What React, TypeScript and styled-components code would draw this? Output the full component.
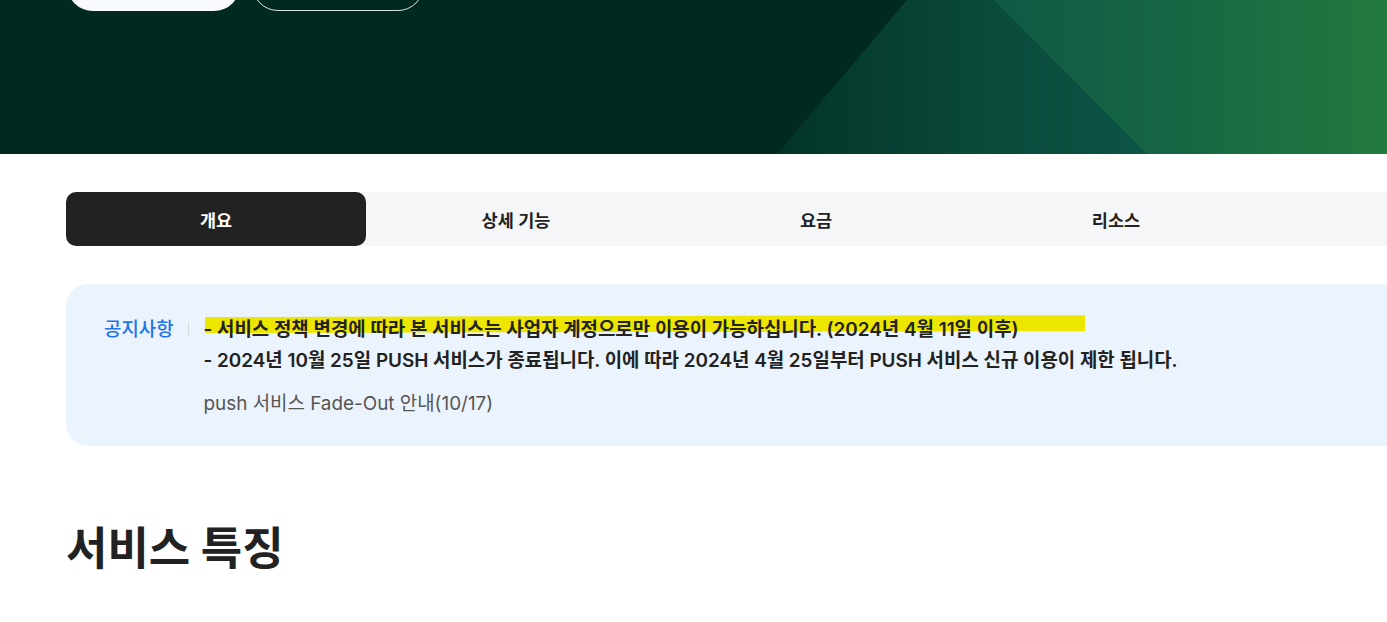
import React from "react";
import styled, { createGlobalStyle } from "styled-components";

const GlobalStyle = createGlobalStyle`
  html, body {
    margin: 0;
    padding: 0;
    background: #ffffff;
    overflow-x: hidden;
  }
  body {
    font-family: Inter, "Noto Sans CJK KR", sans-serif;
    color: #222222;
  }
`;

const tabs = ["개요", "상세 기능", "요금", "리소스"];

const notices = [
  "- 서비스 정책 변경에 따라 본 서비스는 사업자 계정으로만 이용이 가능하십니다. (2024년 4월 11일 이후)",
  "- 2024년 10월 25일 PUSH 서비스가 종료됩니다. 이에 따라 2024년 4월 25일부터 PUSH 서비스 신규 이용이 제한 됩니다.",
];

const HeroArt: React.FC = () => (
  <HeroSvg viewBox="0 0 1387 154" preserveAspectRatio="none">
    <defs>
      <linearGradient id="gA" x1="777" y1="0" x2="1387" y2="0" gradientUnits="userSpaceOnUse">
        <stop offset="0" stopColor="#03342a" />
        <stop offset="0.35" stopColor="#0a4a3b" />
        <stop offset="0.6" stopColor="#0c5444" />
        <stop offset="1" stopColor="#145f45" />
      </linearGradient>
      <linearGradient id="gB" x1="1000" y1="0" x2="1387" y2="0" gradientUnits="userSpaceOnUse">
        <stop offset="0" stopColor="#0f5a46" />
        <stop offset="0.45" stopColor="#176644" />
        <stop offset="1" stopColor="#217a3e" />
      </linearGradient>
    </defs>
    <rect x="0" y="0" width="1387" height="154" fill="#002920" />
    <polygon points="907,0 1387,0 1387,154 777,154" fill="url(#gA)" />
    <polygon points="994,0 1387,0 1387,154 1147,154" fill="url(#gB)" />
  </HeroSvg>
);

const App: React.FC = () => (
  <>
    <GlobalStyle />
    <Hero>
      <HeroArt />
      <HeroButtons>
        <PrimaryButton />
        <OutlineButton />
      </HeroButtons>
    </Hero>

    <Main>
      <TabBar>
        {tabs.map((t, i) => (
          <Tab key={t} $active={i === 0}>
            {t}
          </Tab>
        ))}
      </TabBar>

      <NoticeBox>
        <NoticeLabel>공지사항</NoticeLabel>
        <NoticeDivider />
        <NoticeBody>
          <Highlight />
          {notices.map((n) => (
            <NoticeLine key={n}>{n}</NoticeLine>
          ))}
          <NoticeLink>push 서비스 Fade-Out 안내(10/17)</NoticeLink>
        </NoticeBody>
      </NoticeBox>

      <SectionTitle>서비스 특징</SectionTitle>
    </Main>
  </>
);

export default App;

const Hero = styled.section`
  position: relative;
  height: 154px;
  overflow: hidden;
`;

const HeroSvg = styled.svg`
  position: absolute;
  inset: 0;
  width: 100%;
  height: 100%;
  display: block;
`;

const HeroButtons = styled.div`
  position: relative;
  display: flex;
  gap: 12px;
  margin-top: -41px;
  padding-left: 67px;
`;

const PrimaryButton = styled.div`
  width: 173px;
  height: 52px;
  border-radius: 26px;
  background: #f8fafd;
`;

const OutlineButton = styled.div`
  width: 170px;
  height: 50px;
  border-radius: 26px;
  border: 1px solid #d8e0dc;
`;

const Main = styled.main`
  padding: 38px 0 0 66px;
  margin-right: -80px;
`;

const TabBar = styled.nav`
  display: flex;
  height: 54px;
  background: #f4f6f8;
  border-radius: 10px;
`;

const Tab = styled.div<{ $active?: boolean }>`
  width: 300px;
  flex: none;
  display: flex;
  align-items: center;
  justify-content: center;
  border-radius: 10px;
  font-size: 17.5px;
  font-weight: 600;
  background: ${(p) => (p.$active ? "#222222" : "transparent")};
  color: ${(p) => (p.$active ? "#ffffff" : "#222222")};
`;

const NoticeBox = styled.div`
  display: flex;
  align-items: flex-start;
  margin-top: 38px;
  padding: 30px 38px 27px;
  background: #ebf3fd;
  border-radius: 22px;
`;

const NoticeLabel = styled.span`
  font-size: 18.9px;
  line-height: 31px;
  color: #1f74e8;
  font-weight: 500;
`;

const NoticeDivider = styled.span`
  width: 1px;
  height: 15px;
  margin: 8px 15px 0 14px;
  background: #d6dbe2;
`;

const NoticeBody = styled.div`
  position: relative;
  display: flex;
  flex-direction: column;
`;

const Highlight = styled.div`
  position: absolute;
  left: 1px;
  top: 3px;
  width: 880px;
  height: 16px;
  background: #ede600;
  transform: rotate(-0.12deg);
  transform-origin: left center;
`;

const NoticeLine = styled.p`
  position: relative;
  margin: 0;
  font-size: 18.9px;
  line-height: 31px;
  font-weight: 600;
  color: #222222;
`;

const NoticeLink = styled.p`
  margin: 12px 0 0;
  font-size: 18.9px;
  line-height: 31px;
  color: #555555;
`;

const SectionTitle = styled.h2`
  margin: 75px 0 0;
  font-size: 45px;
  line-height: 56px;
  font-weight: 700;
  color: #222222;
`;
